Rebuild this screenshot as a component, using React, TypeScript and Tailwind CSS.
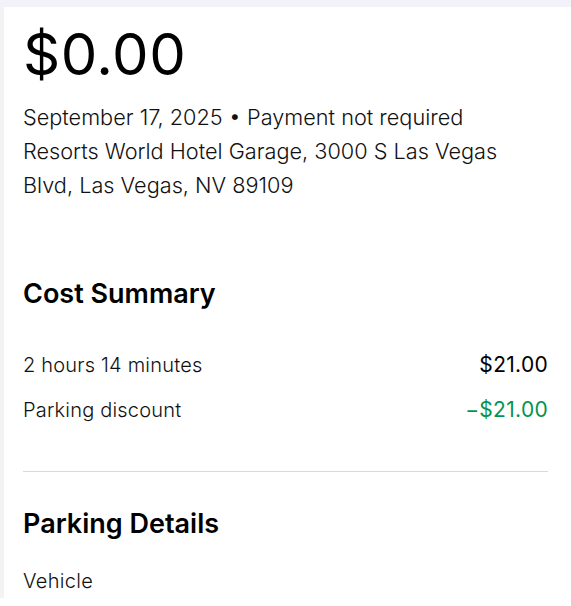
import React from "react";

const rows = [
  { label: "2 hours 14 minutes", amount: "$21.00", discount: false },
  { label: "Parking discount", amount: "−$21.00", discount: true },
];

const App = () => {
  return (
    <div className="min-h-[606px] bg-white font-['Inter',sans-serif] text-black">
      <div className="h-[7px] bg-[#f3f2fb]" />
      <main className="border-l-4 border-[#f3f3f3] pl-[19px] pr-[23px]">
        <section className="pt-[15px]">
          <h1 className="text-[58px] leading-[64px] font-normal tracking-[0.5px]">$0.00</h1>
          <div className="mt-[14px] text-[21.7px] leading-[34px] font-light text-[#111]">
            <p>September 17, 2025 • Payment not required</p>
            <p className="max-w-[490px]">Resorts World Hotel Garage, 3000 S Las Vegas Blvd, Las Vegas, NV 89109</p>
          </div>
        </section>

        <section className="pt-[76px] pb-[44px] border-b border-[#d9d9d9]">
          <h2 className="text-[27px] leading-[32px] font-semibold">Cost Summary</h2>
          <div className="mt-[38px] flex flex-col gap-[11px] text-[20px] leading-[34px] font-light">
            {rows.map((row) => (
              <div key={row.label} className="flex items-center justify-between">
                <span className="text-[#111] tracking-[0.2px]">{row.label}</span>
                <span
                  className={
                    row.discount
                      ? "text-[21px] tracking-[0.3px] text-[#05944f] font-normal"
                      : "text-[21px] tracking-[0.3px] text-black font-normal"
                  }
                >
                  {row.amount}
                </span>
              </div>
            ))}
          </div>
        </section>

        <section className="pt-[36px]">
          <h2 className="text-[27px] leading-[32px] font-semibold">Parking Details</h2>
          <p className="mt-[24px] text-[20px] leading-[34px] font-light tracking-[0.3px] text-[#111]">Vehicle</p>
        </section>
      </main>
    </div>
  );
};

export default App;
